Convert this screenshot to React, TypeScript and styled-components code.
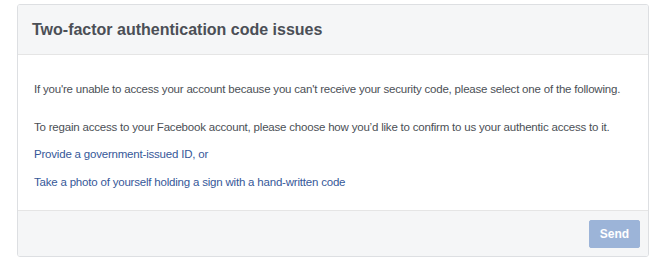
import styled, { createGlobalStyle } from "styled-components";

const GlobalStyle = createGlobalStyle`
body {
    margin: 0;
    background: #ffffff;
    font-family: "Liberation Sans", Arial, sans-serif;
}
`;

const Page = styled.div`
padding: 4px 0 0 17px;
`;

const Card = styled.div`
width: 630px;
border: 1px solid #dddfe2;
border-radius: 3px;
background: #ffffff;
overflow: hidden;
`;

const Header = styled.div`
height: 49px;
display: flex;
align-items: center;
padding: 0 14px;
background: #f5f6f7;
border-bottom: 1px solid #e5e5e5;
`;

const Title = styled.h2`
margin: 0;
font-size: 16px;
font-weight: 700;
color: #4b4f56;
white-space: nowrap;
`;

const Body = styled.div`
padding: 26px 16px 20px;
`;

const Paragraph = styled.p<{ $gap: number }>`
margin: 0 0 ${p => p.$gap}px;
font-size: 11.5px;
letter-spacing: -0.2px;
line-height: 16px;
color: #4b4f56;
white-space: nowrap;

&:last-child {
    margin-bottom: 0;
}
`;

const TextLink = styled.a`
color: #365899;
text-decoration: none;
cursor: pointer;

&:hover {
    text-decoration: underline;
}
`;

const Footer = styled.div`
height: 45px;
display: flex;
align-items: center;
justify-content: flex-end;
padding: 0 8px;
background: #f5f6f7;
border-top: 1px solid #e5e5e5;
`;

const SendButton = styled.button`
height: 28px;
width: 51px;
padding: 0;
border: 1px solid #9cb4d8;
border-radius: 2px;
background: #9cb4d8;
color: #ffffff;
font-family: "Liberation Sans", Arial, sans-serif;
font-size: 12px;
font-weight: 700;
cursor: default;
`;

export default function App() {
    return (
        <>
            <GlobalStyle />
            <Page>
                <Card>
                    <Header>
                        <Title>Two-factor authentication code issues</Title>
                    </Header>
                    <Body>
                        <Paragraph $gap={22}>
                            If you're unable to access your account because you can't receive your security code, please select one of the following.
                        </Paragraph>
                        <Paragraph $gap={11}>
                            To regain access to your Facebook account, please choose how you’d like to confirm to us your authentic access to it.
                        </Paragraph>
                        <Paragraph $gap={12}>
                            <TextLink>Provide a government-issued ID, or</TextLink>
                        </Paragraph>
                        <Paragraph $gap={0}>
                            <TextLink>Take a photo of yourself holding a sign with a hand-written code</TextLink>
                        </Paragraph>
                    </Body>
                    <Footer>
                        <SendButton disabled>Send</SendButton>
                    </Footer>
                </Card>
            </Page>
        </>
    );
}
